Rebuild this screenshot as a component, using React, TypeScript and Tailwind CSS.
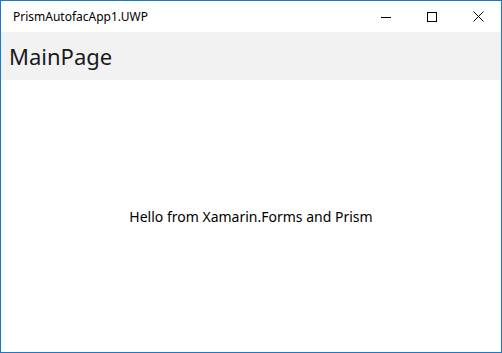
export default function App() {
  return (
    <div className="w-[502px] h-[353px] border border-[#1979ca] bg-white flex flex-col overflow-hidden" style={{ fontFamily: '"Segoe UI", "Noto Sans", "Open Sans", sans-serif' }}>
      <div className="h-[31px] flex items-center shrink-0">
        <div className="pl-[12px] text-[12px] text-black flex-1 leading-none">PrismAutofacApp1.UWP</div>
        <div className="flex h-full">
          <div className="w-[46px] h-full flex items-center justify-center">
            <svg width="10" height="10" viewBox="0 0 10 10"><path d="M0 5.5 H10" stroke="#000" strokeWidth="1" /></svg>
          </div>
          <div className="w-[46px] h-full flex items-center justify-center">
            <svg width="10" height="10" viewBox="0 0 10 10"><rect x="0.5" y="0.5" width="9" height="9" fill="none" stroke="#000" strokeWidth="1" /></svg>
          </div>
          <div className="w-[46px] h-full flex items-center justify-center">
            <svg width="11" height="11" viewBox="0 0 11 11"><path d="M0.5 0.5 L10.5 10.5 M10.5 0.5 L0.5 10.5" stroke="#000" strokeWidth="1" /></svg>
          </div>
        </div>
      </div>
      <div className="h-[48px] bg-[#f2f2f2] flex items-center pl-[8px] shrink-0">
        <span className="text-[22px] text-[#1a1a1a] leading-none">MainPage</span>
      </div>
      <div className="flex-1 flex items-center justify-center">
        <span className="text-[14px] text-black">Hello from Xamarin.Forms and Prism</span>
      </div>
    </div>
  );
}
